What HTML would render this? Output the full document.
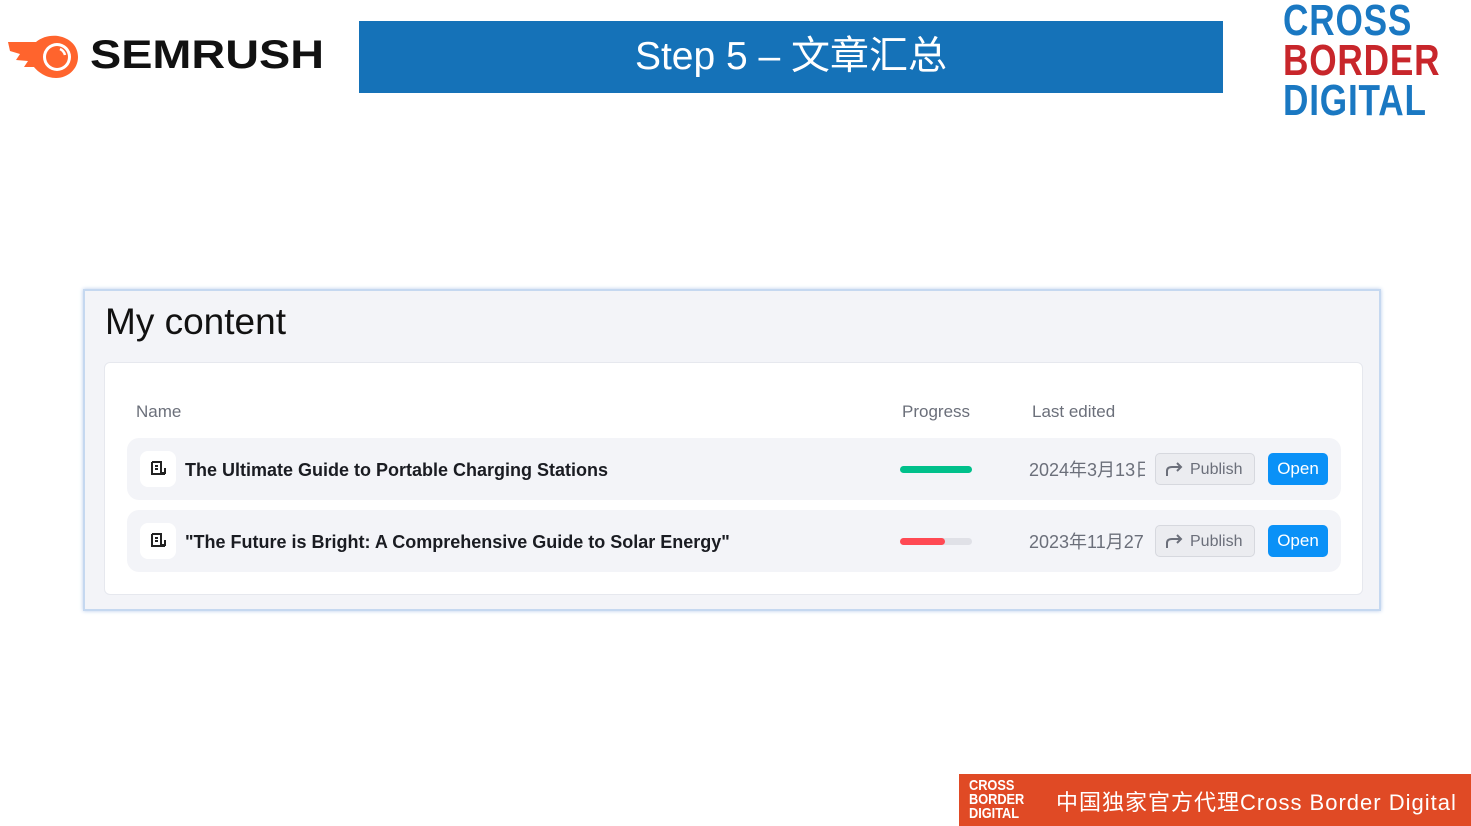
<!DOCTYPE html>
<html><head><meta charset="utf-8"><style>
*{box-sizing:border-box;margin:0;padding:0}
body{width:1471px;height:826px;background:#fff;position:relative;overflow:hidden;font-family:"Liberation Sans","Noto Sans CJK SC",sans-serif}
.abs{position:absolute}
.banner{left:359px;top:21px;width:864px;height:72px;background:#1572b8;color:#fff;font-size:39px;text-align:center;line-height:72px;font-family:"Liberation Sans","Noto Sans CJK SC",sans-serif}
.card{left:83px;top:289px;width:1298px;height:322px;background:#f3f4f8;border:2px solid #c5d8f0;box-shadow:0 0 4px #b7cdeb}
.h{left:20px;top:10px;font-size:37px;color:#111}
.inner{left:19px;top:71px;width:1259px;height:233px;background:#fff;border-radius:6px;border:1px solid #e6e8ee}
.col{font-size:17px;color:#6b6f7a;top:39px}
.row{left:22px;width:1214px;height:62px;background:#f3f4f8;border-radius:12px}
.ic{left:13px;top:13px;width:36px;height:36px;background:#fff;border-radius:8px}
.title{left:58px;top:22px;font-size:18px;font-weight:bold;color:#1a1c22}
.bar{left:773px;top:28px;width:72px;height:7px;border-radius:4px;background:#e0e1e7}
.date{left:902px;top:18px;font-size:18px;color:#6b6f7a;width:116px;overflow:hidden;white-space:nowrap}
.pub{left:1028px;top:15px;width:100px;height:32px;border:1px solid #d6d8de;background:#ebecf0;border-radius:5px;font-size:16px;color:#6b6f7a;line-height:32px;padding-left:34px}
.open{left:1141px;top:15px;width:60px;height:32px;background:#0a91f7;border-radius:5px;color:#fff;font-size:17px;line-height:32px;text-align:center}
.foot{left:959px;top:774px;width:512px;height:52px;background:#e04a25;color:#fff}
</style></head><body>
<svg class="abs" style="left:6px;top:34px" width="74" height="46" viewBox="0 0 74 46">
<path d="M2 8 L30 8 C36 3 44 1 52 2 C64 4 72 12 72 23 C72 35 62 44 50 44 C40 44 32 38 28 33 L18 33 L22 27 L10 26 L14 20 L4 17 Z" fill="#ff642d"/>
<circle cx="51" cy="23" r="14" fill="#fff"/><circle cx="51" cy="23" r="11" fill="#ff642d"/>
<path d="M54 15 A9 9 0 0 1 59 21" stroke="#fff" stroke-width="2.5" fill="none"/>
</svg>
<div class="abs" style="left:90px;top:33px;font-size:40px;font-weight:bold;color:#111;transform:scaleX(1.17);transform-origin:0 0">SEMRUSH</div>
<div class="abs banner">Step 5 – 文章汇总</div>
<div class="abs" style="left:1283px;top:1px;font-weight:bold;font-size:44px;line-height:40px;letter-spacing:1px;transform:scaleX(0.8);transform-origin:0 0">
<div style="color:#1a78c2">CROSS</div><div style="color:#c8262b">BORDER</div><div style="color:#1a78c2">DIGITAL</div></div>
<div class="abs card">
<div class="abs h">My content</div>
<div class="abs inner">
<div class="abs col" style="left:31px">Name</div>
<div class="abs col" style="left:797px">Progress</div>
<div class="abs col" style="left:927px">Last edited</div>
<div class="abs row" style="top:75px">
<div class="abs ic"><svg width="36" height="36" viewBox="0 0 36 36"><path d="M12 11h9v11h4v-5M12 11v12h13M15 15h3M15 18h3" stroke="#222" stroke-width="2" fill="none"/></svg></div>
<div class="abs title">The Ultimate Guide to Portable Charging Stations</div>
<div class="abs bar" style="background:#00c08b"></div>
<div class="abs date">2024年3月13日</div>
<div class="abs pub"><svg class="abs" style="left:8px;top:7px" width="20" height="16" viewBox="0 0 20 16"><path d="M3 15V10C3 7 5 6 8 6H17M13 2l4 4-4 4" stroke="#6b6f7a" stroke-width="2" fill="none"/></svg>Publish</div>
<div class="abs open">Open</div>
</div>
<div class="abs row" style="top:147px">
<div class="abs ic"><svg width="36" height="36" viewBox="0 0 36 36"><path d="M12 11h9v11h4v-5M12 11v12h13M15 15h3M15 18h3" stroke="#222" stroke-width="2" fill="none"/></svg></div>
<div class="abs title">"The Future is Bright: A Comprehensive Guide to Solar Energy"</div>
<div class="abs bar"><div style="width:45px;height:7px;border-radius:4px;background:#ff4953"></div></div>
<div class="abs date">2023年11月27日</div>
<div class="abs pub"><svg class="abs" style="left:8px;top:7px" width="20" height="16" viewBox="0 0 20 16"><path d="M3 15V10C3 7 5 6 8 6H17M13 2l4 4-4 4" stroke="#6b6f7a" stroke-width="2" fill="none"/></svg>Publish</div>
<div class="abs open">Open</div>
</div>
</div>
</div>
<div class="abs foot">
<div class="abs" style="left:10px;top:5px;font-size:15px;font-weight:bold;line-height:14px;transform:scaleX(0.85);transform-origin:0 0">CROSS<br>BORDER<br>DIGITAL</div>
<div class="abs" style="left:97px;top:11px;font-size:22px;letter-spacing:1px;white-space:nowrap">中国独家官方代理Cross Border Digital</div>
</div>
</body></html>
